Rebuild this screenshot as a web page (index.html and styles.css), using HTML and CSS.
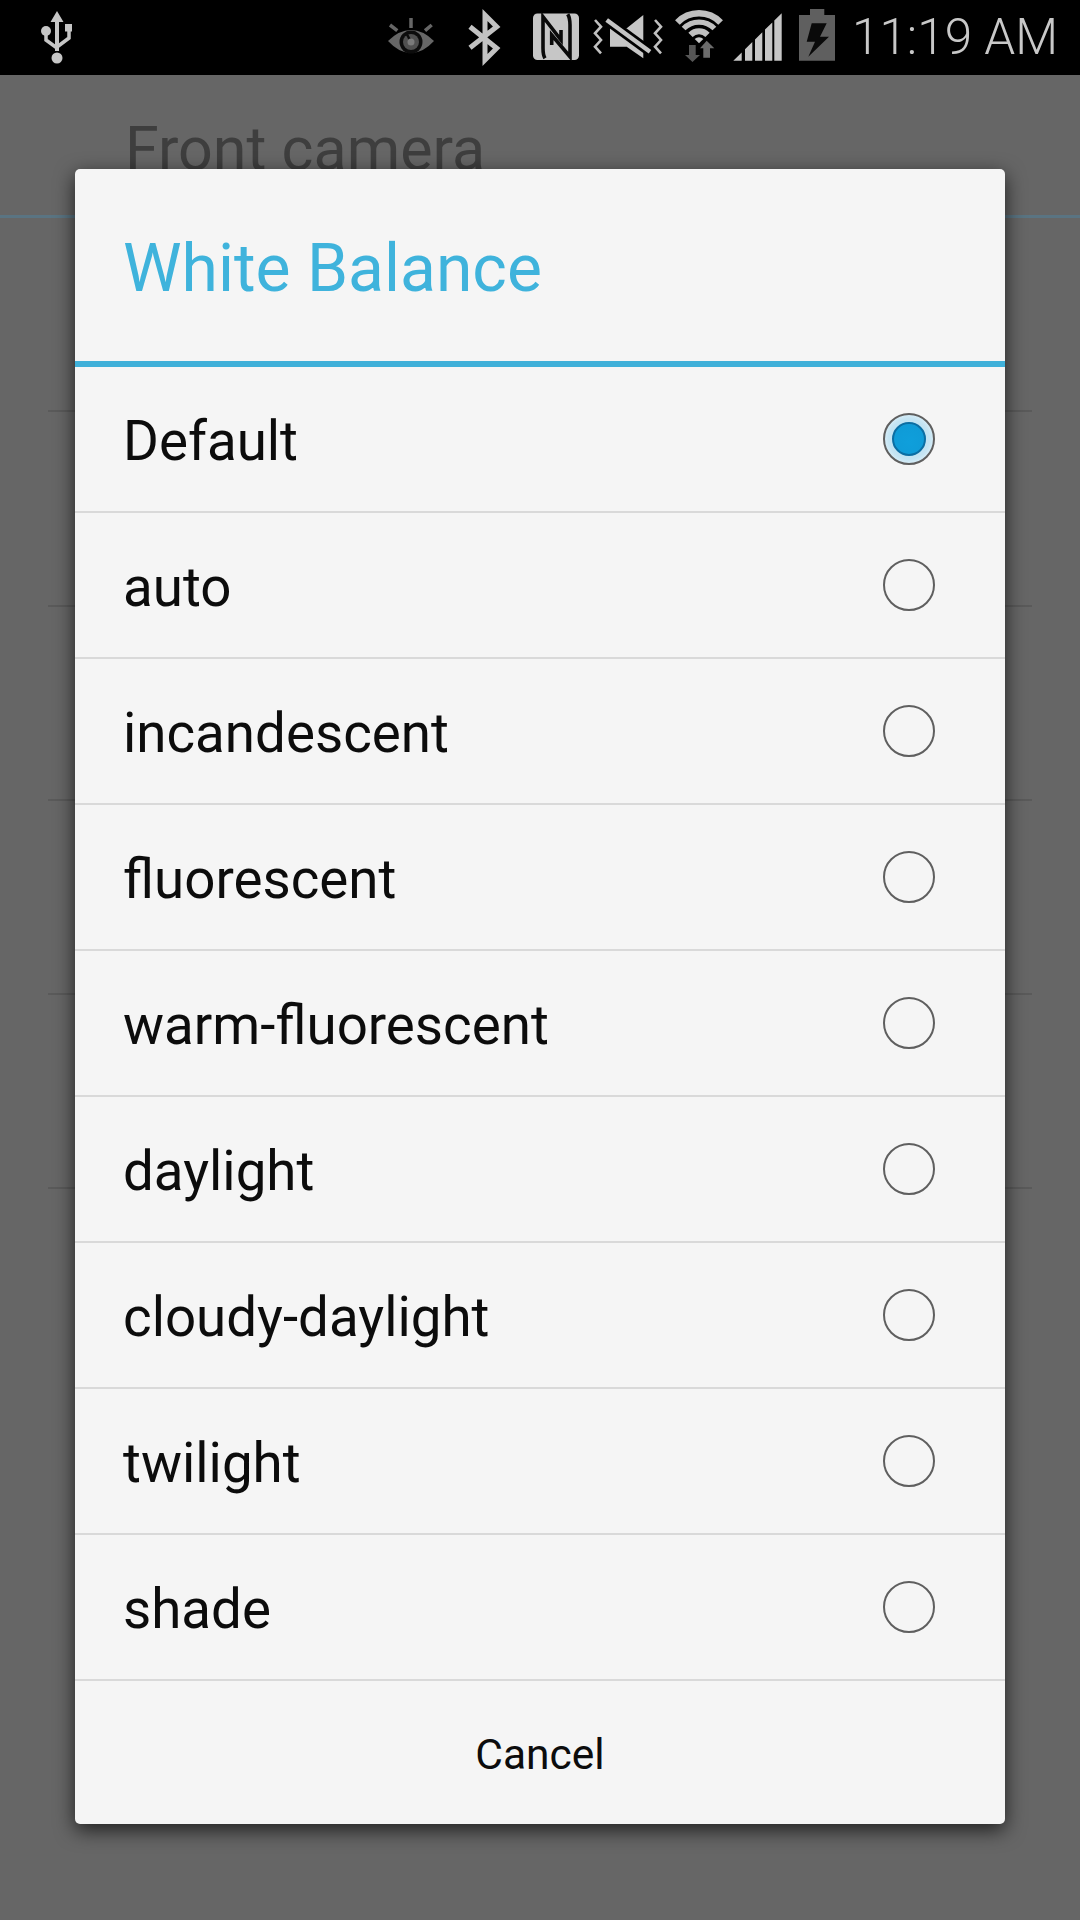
FILE: index.html
```html
<!DOCTYPE html>
<html lang="en">
<head>
<meta charset="utf-8">
<title>White Balance</title>
<link rel="stylesheet" href="styles.css">
</head>
<body>
<div class="phone">
  <header class="statusbar">
    <svg class="ic ic-usb" viewBox="30 0 50 75" aria-hidden="true">
      <path class="g" d="M57 11l6.500 11h-4.500v29h-4v-29h-4.500z"/>
      <circle class="g" cx="57" cy="58" r="5.500"/>
      <circle class="g" cx="46" cy="31" r="5"/>
      <rect class="g" x="65" y="24" width="7" height="7.500"/>
      <path class="gs" d="M46 35v5l11 8M69 31v7l-12 9"/>
    </svg>
    <div class="status-right">
      <svg class="ic ic-eye" viewBox="380 0 70 75" aria-hidden="true">
        <path class="d" d="M388 41Q399 30 411 30T434 41Q423 53 411 53T388 41z"/>
        <path class="ds" d="M411 18v10M390 25l7.300 5.700M431.700 25l-6.700 5.700"/>
        <circle cx="411" cy="42" r="11.500" fill="#0c0c0c"/>
        <circle cx="411" cy="42" r="8" fill="#505050"/>
        <path d="M406.500 33.500L411 42" stroke="#0c0c0c" stroke-width="2.500"/>
        <circle cx="411" cy="42" r="3.500" fill="#7a7a7a"/>
      </svg>
      <svg class="ic ic-bt" viewBox="450 0 75 75" aria-hidden="true">
        <path class="bt" d="M470 26.700L496.700 48.300 485 60V15L496.700 26.700 470 47.700"/>
      </svg>
      <svg class="ic ic-nfc" viewBox="525 0 62 75" aria-hidden="true">
        <rect class="g" x="533" y="13.500" width="46" height="46.500" rx="4.500"/>
        <path class="n" d="M545 58.300Q543 55 543 48V16.700L561 40V30"/>
        <path class="n" d="M567.700 14.300Q570 18 570 25V56.700L551.700 35V45"/>
      </svg>
      <svg class="ic ic-mute" viewBox="587 0 80 75" aria-hidden="true">
        <path class="g" d="M643.300 15L626.700 28.300H610V46.700H626.700L643.300 58.300z"/>
        <path d="M606.700 20L650 51.700" stroke="#000" stroke-width="10"/>
        <path d="M606.700 20L650 51.700" stroke="#c4c4c4" stroke-width="4.500"/>
        <path class="z" d="M595 20l6 6.700-6 6.600 6 6.700-6 6.700 6 6.600"/>
        <path class="z" d="M655 20l6 6.700-6 6.600 6 6.700-6 6.700 6 6.600"/>
      </svg>
      <svg class="ic ic-wifi" viewBox="667 0 62 75" aria-hidden="true">
        <path class="w w1" d="M677.400 22.400A30 30 0 0 1 720.600 22.400"/>
        <path class="w w2" d="M683.600 28.500A21.700 21.700 0 0 1 714.400 28.500"/>
        <path class="w w3" d="M690.500 34.800A12 12 0 0 1 707.500 34.800"/>
        <path class="g" d="M699 43.300l-4.300-4.300a6 6 0 0 1 8.600 0z"/>
        <path fill="#565656" d="M689 45h6.700v10H700L692.500 62 685 55h4z"/>
        <path fill="#6c6c6c" d="M706.700 40.700L714.300 48.300H710V57.700H703.300V48.300H700z"/>
      </svg>
      <svg class="ic ic-signal" viewBox="729 0 61 75" aria-hidden="true">
        <path class="g" d="M733.300 60.700L741.700 52.500V60.700zM745 49.200L752.300 42.100V60.700H745zM755 39.400L762.300 32.300V60.700H755zM765 29.600L772.300 22.500V60.700H765zM774.300 20.500L781.700 13.300V60.700H774.300z"/>
      </svg>
      <svg class="ic ic-batt" viewBox="790 0 55 75" aria-hidden="true">
        <path fill="#5f5f5f" d="M810 9H824.300V15H835V60.700H799V15H810z"/>
        <path fill="#0a0a0a" d="M811.700 23.300H826.700L820 36.700H829L808.300 56.700 815 41.700H806.700z"/>
      </svg>
      <span class="clock">11:19 AM</span>
    </div>
  </header>

  <main class="backdrop">
    <h1 class="screen-title">Front camera</h1>
    <ul class="settings">
      <li></li><li></li><li></li><li></li><li></li>
    </ul>
  </main>

  <section class="dialog" role="dialog" aria-label="White Balance">
    <h2 class="dialog-title">White Balance</h2>
    <ul class="options">
      <li class="option"><span class="label">Default</span><i class="radio radio-on"></i></li>
      <li class="option"><span class="label">auto</span><i class="radio"></i></li>
      <li class="option"><span class="label">incandescent</span><i class="radio"></i></li>
      <li class="option"><span class="label">fluorescent</span><i class="radio"></i></li>
      <li class="option"><span class="label">warm-fluorescent</span><i class="radio"></i></li>
      <li class="option"><span class="label">daylight</span><i class="radio"></i></li>
      <li class="option"><span class="label">cloudy-daylight</span><i class="radio"></i></li>
      <li class="option"><span class="label">twilight</span><i class="radio"></i></li>
      <li class="option"><span class="label">shade</span><i class="radio"></i></li>
    </ul>
    <div class="cancel">Cancel</div>
  </section>
</div>
</body>
</html>
```
FILE: styles.css
```css
* { box-sizing: border-box; }
html, body { margin: 0; padding: 0; }
body { background: #666; font-family: Roboto, "Noto Sans", sans-serif; }
ul { list-style: none; margin: 0; padding: 0; }

.phone { position: relative; width: 1080px; height: 1920px; overflow: hidden; background: #666; }

.statusbar { display: flex; justify-content: space-between; align-items: center; height: 75px; padding-left: 30px; padding-right: 22px; background: #000; }
.status-right { display: flex; align-items: center; height: 75px; }
.ic { display: block; height: 75px; flex: none; }
.ic-usb { width: 50px; }
.ic-eye { width: 70px; }
.ic-bt { width: 75px; }
.ic-nfc, .ic-wifi { width: 62px; }
.ic-mute { width: 80px; }
.ic-signal { width: 61px; }
.ic-batt { width: 55px; }
.g { fill: #c6c6c6; }
.gs { fill: none; stroke: #c6c6c6; stroke-width: 3.5; }
.d { fill: #666; }
.ds { fill: none; stroke: #666; stroke-width: 3.5; }
.bt { fill: none; stroke: #c2c2c2; stroke-width: 5; }
.n { fill: none; stroke: #0a0a0a; stroke-width: 3.6; }
.z { fill: none; stroke: #c0c0c0; stroke-width: 2.6; }
.w { fill: none; stroke: #c0c0c0; }
.w1 { stroke-width: 6.500; }
.w2 { stroke-width: 5.300; }
.w3 { stroke-width: 6; }
.clock { margin-left: 7px; color: #c8c8c8; font-size: 49.500px; font-weight: 300; line-height: 75px; white-space: nowrap; }

.screen-title { margin: 0; height: 143px; padding-left: 125px; padding-top: 39px; border-bottom: 3px solid #5a7482; color: #3e3e3e; font-size: 61px; font-weight: 400; line-height: 70px; white-space: nowrap; }
.settings { padding: 0 48px; }
.settings li { height: 194.300px; border-bottom: 2px solid #5a5a5a; }

.dialog { position: absolute; left: 75px; top: 169px; width: 930px; height: 1655px; display: flex; flex-direction: column; background: #f5f5f5; border-radius: 5px; box-shadow: 0 6px 20px rgba(0, 0, 0, .7); }
.dialog-title { flex: none; display: flex; align-items: center; height: 198px; margin: 0; padding: 6px 48px 0; border-bottom: 6px solid #3fb0d9; color: #3fb3dc; font-size: 66px; font-weight: 400; }
.option { display: flex; justify-content: space-between; align-items: center; height: 146px; padding: 0 70px 0 48px; border-bottom: 2px solid #d9d9d9; color: #0c0c0c; font-size: 54.700px; }
.label { padding-top: 3px; }
.radio { display: block; flex: none; width: 52px; height: 52px; border: 2px solid #5f5f5f; border-radius: 50%; }
.radio-on { display: grid; place-items: center; background: radial-gradient(circle, #b5def1 0, #c4e4f3 60%, #e3f2f9 80%, #f5f5f5 100%); }
.radio-on::after { content: ""; width: 30px; height: 30px; border-radius: 50%; background: radial-gradient(circle at 50% 60%, #0f9fdb 0, #0f9bd7 72%, #41aedd 100%); border: 2px solid #0b6ea3; }
.cancel { flex: 1; display: flex; align-items: center; justify-content: center; padding-top: 4px; color: #0c0c0c; font-size: 42.500px; }
```
